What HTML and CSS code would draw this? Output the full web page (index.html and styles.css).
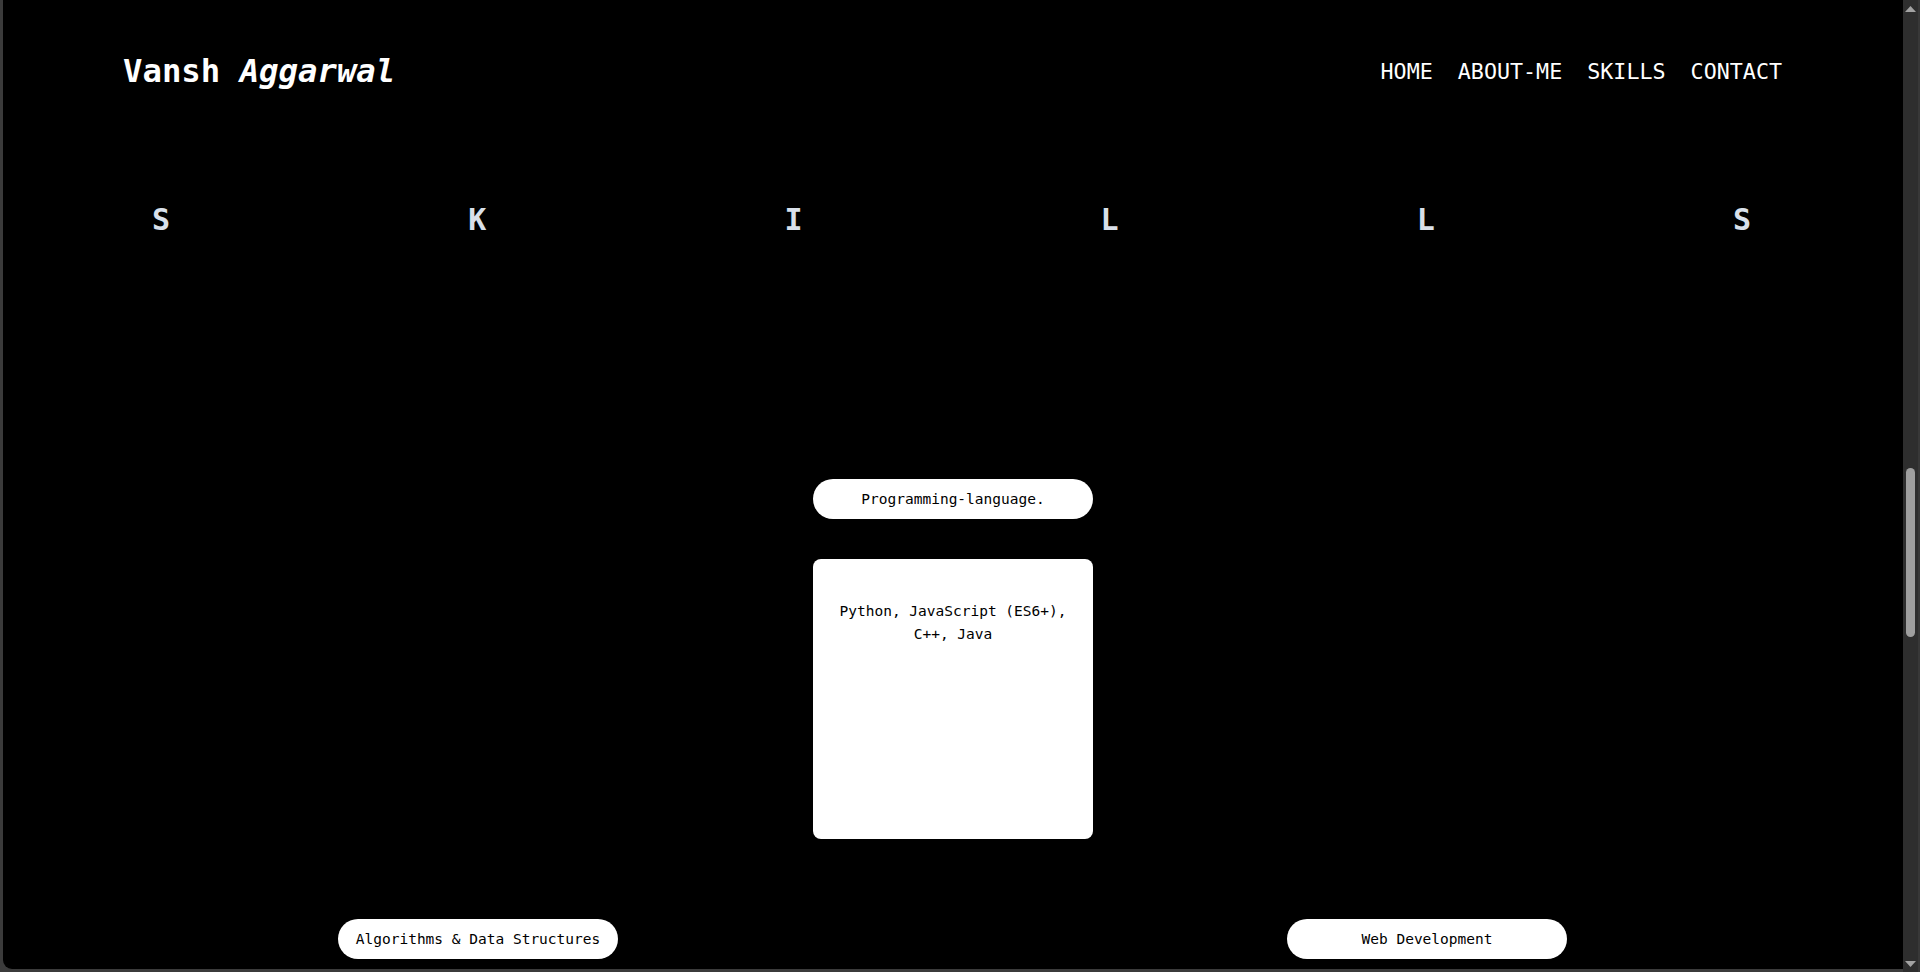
FILE: index.html
```html
<!DOCTYPE html>
<html lang="en">
<head>
<meta charset="utf-8">
<title>Vansh Aggarwal</title>
<link rel="stylesheet" href="styles.css">
</head>
<body>
<div class="window">
  <main class="page">
    <header class="header">
      <div class="logo">Vansh <em>Aggarwal</em></div>
      <nav class="nav">
        <a href="#home">HOME</a>
        <a href="#about">ABOUT-ME</a>
        <a href="#skills">SKILLS</a>
        <a href="#contact">CONTACT</a>
      </nav>
    </header>

    <section class="skills" id="skills">
      <div class="letters">
        <span>S</span><span>K</span><span>I</span><span>L</span><span>L</span><span>S</span>
      </div>

      <div class="row row-one">
        <div class="skill">
          <div class="pill">Programming-language.</div>
          <div class="card">Python, JavaScript (ES6+), C++, Java</div>
        </div>
      </div>

      <div class="row row-two">
        <div class="skill">
          <div class="pill">Algorithms &amp; Data Structures</div>
          <div class="card"></div>
        </div>
        <div class="skill">
          <div class="pill">Web Development</div>
          <div class="card"></div>
        </div>
      </div>
    </section>
  </main>

  <div class="scrollbar">
    <div class="arrow">
      <svg width="11" height="6" viewBox="0 0 11 6"><path d="M0 6 L5.5 0 L11 6 Z" fill="#a3a3a3"/></svg>
    </div>
    <div class="track"><div class="thumb"></div></div>
    <div class="arrow">
      <svg width="11" height="6" viewBox="0 0 11 6"><path d="M0 0 L5.5 6 L11 0 Z" fill="#a3a3a3"/></svg>
    </div>
  </div>
</div>
</body>
</html>
```

FILE: styles.css
```css
html, body {
  margin: 0;
  padding: 0;
}

body {
  background: #3b3b3b;
  font-family: "DejaVu Sans Mono", "Liberation Mono", monospace;
  overflow: hidden;
}

.window {
  display: flex;
  height: 972px;
  width: 1920px;
}

.page {
  flex: 1;
  margin-left: 3px;
  height: 969px;
  background: #000;
  border-bottom-left-radius: 9px;
  overflow: hidden;
  color: #fff;
}

.header {
  display: flex;
  justify-content: space-between;
  align-items: flex-start;
  padding: 52px 121px 0 120px;
}

.logo {
  font-size: 32.3px;
  font-weight: bold;
  line-height: 1.2;
  color: #fff;
}

.logo em {
  font-style: italic;
}

.nav {
  display: flex;
  gap: 25px;
  margin-top: 7px;
}

.nav a {
  color: #fff;
  text-decoration: none;
  font-size: 21.7px;
  line-height: 1.2;
}

.letters {
  display: flex;
  margin-top: 111px;
  padding-right: 3px;
}

.letters span {
  flex: 1;
  text-align: center;
  font-size: 30px;
  font-weight: bold;
  line-height: 36px;
  color: #d9e0ea;
}

.skills {
  display: flex;
  flex-direction: column;
}

.row {
  display: flex;
  justify-content: center;
}

.row-one {
  margin-top: 241px;
}

.row-two {
  margin-top: 80px;
  gap: 669px;
  padding-right: 1px;
}

.skill {
  display: flex;
  flex-direction: column;
  gap: 40px;
  width: 280px;
}

.pill {
  height: 40px;
  border-radius: 20px;
  background: #fff;
  color: #000;
  font-size: 14.5px;
  display: flex;
  align-items: center;
  justify-content: center;
}

.card {
  height: 280px;
  box-sizing: border-box;
  border-radius: 8px;
  background: #fff;
  color: #000;
  font-size: 14.5px;
  line-height: 23px;
  text-align: center;
  padding: 41px 20px 20px;
}

.scrollbar {
  width: 17px;
  height: 972px;
  background: #2e2e2e;
  border-right: 2px solid #383838;
  box-sizing: border-box;
  display: flex;
  flex-direction: column;
}

.arrow {
  height: 17px;
  display: flex;
  align-items: center;
  justify-content: center;
}

.track {
  flex: 1;
  display: flex;
  flex-direction: column;
  align-items: center;
}

.thumb {
  margin-top: 451px;
  width: 9px;
  height: 169px;
  border-radius: 5px;
  background: #9f9f9f;
}
```
